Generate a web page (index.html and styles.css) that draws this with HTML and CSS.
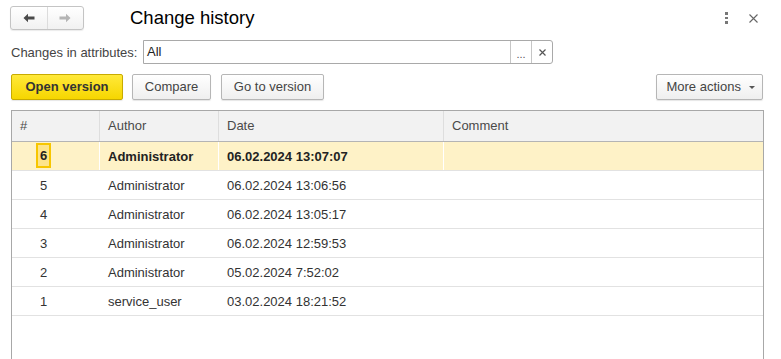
FILE: index.html
```html
<!DOCTYPE html>
<html>
<head>
<meta charset="utf-8">
<link rel="stylesheet" href="styles.css">
</head>
<body>
<div class="page">
  <div class="header">
    <div class="nav">
      <div class="nav-btn">
        <svg width="12" height="10" viewBox="0 0 12 10"><path d="M0.5 5 L5 0.8 L5 3.6 L11.5 3.6 L11.5 6.4 L5 6.4 L5 9.2 Z" fill="#4a4a4a"/></svg>
      </div>
      <div class="nav-sep"></div>
      <div class="nav-btn">
        <svg width="12" height="10" viewBox="0 0 12 10"><path d="M11.5 5 L7 0.8 L7 3.6 L0.5 3.6 L0.5 6.4 L7 6.4 L7 9.2 Z" fill="#b4b4b4"/></svg>
      </div>
    </div>
    <div class="title">Change history</div>
    <div class="spacer"></div>
    <div class="kebab"><span></span><span></span><span></span></div>
    <div class="close">
      <svg width="9" height="9" viewBox="0 0 9 9"><path d="M0.5 0.5 L8.5 8.5 M8.5 0.5 L0.5 8.5" stroke="#666" stroke-width="1.1"/></svg>
    </div>
  </div>

  <div class="filter">
    <div class="label">Changes in attributes:</div>
    <div class="field">
      <div class="field-text">All</div>
      <div class="field-btn dots">...</div>
      <div class="field-btn clear">
        <svg width="7" height="7" viewBox="0 0 7 7"><path d="M0.5 0.5 L6.5 6.5 M6.5 0.5 L0.5 6.5" stroke="#555" stroke-width="1.2"/></svg>
      </div>
    </div>
  </div>

  <div class="toolbar">
    <div class="btn primary">Open version</div>
    <div class="btn compare">Compare</div>
    <div class="btn goto">Go to version</div>
    <div class="spacer"></div>
    <div class="btn more">More actions <span class="caret"></span></div>
  </div>

  <div class="table">
    <div class="row head">
      <div class="cell c1">#</div>
      <div class="cell c2">Author</div>
      <div class="cell c3">Date</div>
      <div class="cell c4">Comment</div>
    </div>
    <div class="row selected">
      <div class="cell c1 num"><span class="current">6</span></div>
      <div class="cell c2">Administrator</div>
      <div class="cell c3">06.02.2024 13:07:07</div>
      <div class="cell c4"></div>
    </div>
    <div class="row">
      <div class="cell c1 num">5</div>
      <div class="cell c2">Administrator</div>
      <div class="cell c3">06.02.2024 13:06:56</div>
      <div class="cell c4"></div>
    </div>
    <div class="row">
      <div class="cell c1 num">4</div>
      <div class="cell c2">Administrator</div>
      <div class="cell c3">06.02.2024 13:05:17</div>
      <div class="cell c4"></div>
    </div>
    <div class="row">
      <div class="cell c1 num">3</div>
      <div class="cell c2">Administrator</div>
      <div class="cell c3">06.02.2024 12:59:53</div>
      <div class="cell c4"></div>
    </div>
    <div class="row">
      <div class="cell c1 num">2</div>
      <div class="cell c2">Administrator</div>
      <div class="cell c3">05.02.2024 7:52:02</div>
      <div class="cell c4"></div>
    </div>
    <div class="row">
      <div class="cell c1 num">1</div>
      <div class="cell c2">service_user</div>
      <div class="cell c3">03.02.2024 18:21:52</div>
      <div class="cell c4"></div>
    </div>
  </div>
</div>
</body>
</html>
```

FILE: styles.css
```css
* { box-sizing: border-box; }
html, body {
  margin: 0;
  padding: 0;
  background: #fff;
  overflow: hidden;
  height: 359px;
}
body {
  font-family: "Liberation Sans", Arial, sans-serif;
  font-size: 13px;
  color: #333;
}
.page {
  width: 781px;
  height: 359px;
  display: flex;
  flex-direction: column;
}
.header {
  display: flex;
  align-items: center;
  height: 24px;
  margin-top: 6px;
  padding-left: 10px;
}
.nav {
  display: flex;
  align-items: stretch;
  width: 74px;
  height: 24px;
  border: 1px solid #c4c4c4;
  border-radius: 3px;
  background: linear-gradient(#ffffff, #f1f1f1);
  box-shadow: 0 1px 1px rgba(0,0,0,0.08);
}
.nav-btn {
  flex: 1;
  display: flex;
  align-items: center;
  justify-content: center;
}
.nav-sep {
  width: 1px;
  background: #dcdcdc;
}
.title {
  margin-left: 46px;
  font-size: 18.5px;
  color: #000;
  line-height: 26px;
}
.spacer { flex: 1; }
.kebab {
  display: flex;
  flex-direction: column;
  gap: 2px;
  width: 3px;
  margin-right: 21px;
}
.kebab span {
  display: block;
  width: 3px;
  height: 2.5px;
  background: #777;
}
.close {
  width: 9px;
  height: 9px;
  margin-right: 23px;
  display: flex;
}
.filter {
  display: flex;
  align-items: center;
  margin-top: 10px;
  padding-left: 11px;
  height: 24px;
}
.label {
  width: 132px;
  color: #444;
  white-space: nowrap;
}
.field {
  display: flex;
  width: 410px;
  height: 24px;
  border: 1px solid #a9a9a9;
  border-radius: 0 3px 3px 0;
  background: #fff;
}
.field-text {
  flex: 1;
  padding-left: 3px;
  line-height: 22px;
  color: #222;
}
.field-btn {
  display: flex;
  align-items: center;
  justify-content: center;
  border-left: 1px solid #c6c6c6;
  color: #555;
}
.dots {
  width: 21px;
  font-size: 11px;
  padding-top: 3px;
}
.clear { width: 21px; }
.toolbar {
  display: flex;
  align-items: center;
  margin-top: 10px;
  padding-left: 11px;
  padding-right: 18px;
  height: 26px;
}
.btn {
  height: 26px;
  line-height: 24px;
  border: 1px solid #b6b6b6;
  border-radius: 2px;
  background: linear-gradient(#ffffff, #efefef);
  color: #444;
  text-align: center;
  box-shadow: 0 1px 1px rgba(0,0,0,0.1);
}
.primary {
  width: 112px;
  font-weight: bold;
  color: #333;
  background: linear-gradient(#ffe93a, #f6d600);
  border-color: #c8ab00;
}
.compare { width: 79px; margin-left: 9px; }
.goto { width: 103px; margin-left: 10px; }
.more {
  width: 107px;
  padding-left: 2px;
}
.caret {
  display: inline-block;
  width: 0;
  height: 0;
  margin-left: 4px;
  vertical-align: 2px;
  border-left: 3px solid transparent;
  border-right: 3px solid transparent;
  border-top: 3px solid #555;
}
.table {
  flex: 1;
  margin-top: 10px;
  margin-left: 11px;
  width: 753px;
  border: 1px solid #a8a8a8;
  border-bottom: none;
  background: #fff;
  overflow: hidden;
}
.row {
  display: flex;
  height: 29px;
  border-bottom: 1px solid #e2e2e2;
}
.row.head {
  height: 31px;
  background: #f2f2f2;
  border-bottom: 1px solid #b4b4b4;
  color: #4a4a4a;
}
.cell {
  padding-left: 8px;
  line-height: 29px;
  white-space: nowrap;
  overflow: hidden;
}
.head .cell { line-height: 29px; }
.c1 { width: 87px; }
.c2 { width: 119px; border-left: 1px solid #dedede; }
.c3 { width: 225px; border-left: 1px solid #dedede; }
.c4 { flex: 1; border-left: 1px solid #dedede; }
.row:not(.head) .cell { border-left-color: transparent; }
.row.selected {
  background: #fef2c7;
  font-weight: bold;
  color: #222;
}
.row.selected .c2,
.row.selected .c3,
.row.selected .c4 { border-left-color: #ffffff; }
.num { padding-left: 28px; }
.current {
  display: inline-block;
  height: 25px;
  line-height: 21px;
  margin-top: 1px;
  margin-left: -4px;
  padding: 0 2px;
  border: 2px solid #f7c600;
  background: #fde48a;
  vertical-align: top;
}
```
